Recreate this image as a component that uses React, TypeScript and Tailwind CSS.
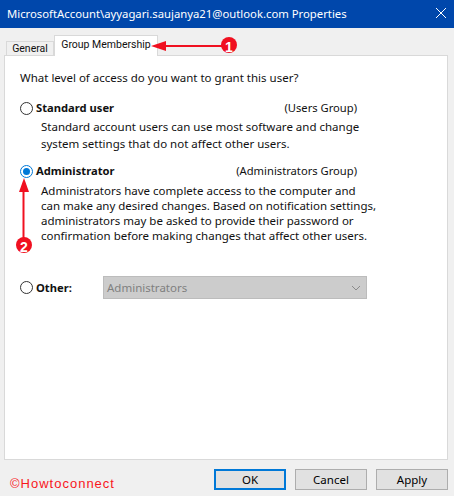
import React from 'react';

const font = "font-['Noto_Sans','Open_Sans',sans-serif]";

const Radio = ({ checked = false }: { checked?: boolean }) => (
    <span className={`flex h-[13px] w-[13px] shrink-0 items-center justify-center rounded-full border bg-white ${checked ? 'border-[#0078d7]' : 'border-[#333333]'}`}>
        {checked && <span className="h-[7px] w-[7px] rounded-full bg-[#0078d7]" />}
    </span>
);

const Button = ({ label, primary = false }: { label: string; primary?: boolean }) => (
    <button className={`flex h-[21px] w-[72px] items-center justify-center bg-[#e1e1e1] text-[11.5px] text-black ${primary ? 'border-2 border-[#0078d7]' : 'border border-[#adadad]'}`}>
        {label}
    </button>
);

const Option = ({ title, group, checked, lines, gap }: { title: string; group: string; checked?: boolean; lines: string[]; gap: string }) => (
    <div className="flex flex-col">
        <div className="flex h-[16px] items-center">
            <Radio checked={checked} />
            <span className="ml-[3px] text-[11.2px] font-bold">{title}</span>
            <span className="ml-auto mr-[3px] text-[11.2px]">{group}</span>
        </div>
        <div className={`flex flex-col pl-[21px] ${gap}`}>
            {lines.map((line) => (
                <span key={line} className="h-[15px] text-[11.5px] leading-[15px] whitespace-nowrap">{line}</span>
            ))}
        </div>
    </div>
);

export default function App() {
    return (
        <div className={`relative flex h-[496px] w-[454px] flex-col overflow-hidden bg-[#f0f0f0] text-[#111111] ${font}`}>
            {/* Title bar */}
            <div className="flex h-[28px] shrink-0 items-center justify-between bg-[#0047ab] pl-[7px] pr-[8px] text-white">
                <span className="text-[11.3px] whitespace-nowrap">MicrosoftAccount\ayyagari.saujanya21@outlook.com Properties</span>
                <svg width="10" height="10" viewBox="0 0 10 10" className="mb-[3px]" aria-hidden="true">
                    <path d="M0 0l10 10M10 0L0 10" stroke="#ffffff" strokeWidth="1" fill="none" />
                </svg>
            </div>

            {/* Tabs */}
            <div className="flex h-[27px] shrink-0 items-end pl-[6px] font-['Roboto',sans-serif]">
                <div className="flex h-[14px] w-[48px] items-center justify-center border border-b-0 border-[#d9d9d9] bg-[#f0f0f0] text-[10.5px]">General</div>
                <div className="z-10 -mb-px flex h-[21px] w-[104px] items-center justify-center border border-b-0 border-[#d9d9d9] bg-white pb-[2px] text-[10.5px] whitespace-nowrap">Group Membership</div>
            </div>

            {/* Panel */}
            <div className="mx-[4px] flex h-[405px] w-[444px] flex-col border border-[#d9d9d9] bg-white pl-[15px] pr-[87px]">
                <p className="mt-[13px] text-[11.5px]">What level of access do you want to grant this user?</p>
                <div className="mt-[14px]">
                    <Option
                        title="Standard user"
                        group="(Users Group)"
                        gap="mt-[3px] gap-[2px]"
                        lines={[
                            'Standard account users can use most software and change',
                            'system settings that do not affect other users.',
                        ]}
                    />
                </div>
                <div className="mt-[12px]">
                    <Option
                        title="Administrator"
                        group="(Administrators Group)"
                        gap="mt-[4px]"
                        checked
                        lines={[
                            'Administrators have complete access to the computer and',
                            'can make any desired changes. Based on notification settings,',
                            'administrators may be asked to provide their password or',
                            'confirmation before making changes that affect other users.',
                        ]}
                    />
                </div>
                <div className="mt-[33px] flex h-[23px] items-center">
                    <Radio />
                    <span className="ml-[3px] w-[67px] shrink-0 pt-px text-[11.2px] font-bold">Other:</span>
                    <div className="flex h-[23px] w-[264px] shrink-0 items-center justify-between border border-[#bcbcbc] bg-[#cccccc] pl-[3px] pr-[5px] text-[11.5px] text-[#7f7f7f]">
                        <span>Administrators</span>
                        <svg width="10" height="6" viewBox="0 0 10 6" aria-hidden="true">
                            <path d="M1 1l4 4 4-4" stroke="#8a8a8a" strokeWidth="1" fill="none" />
                        </svg>
                    </div>
                </div>
            </div>

            {/* Footer */}
            <div className="flex flex-1 items-start justify-between pl-[10px] pr-[6px] pt-[9px]">
                <span className="mt-[5px] font-['Liberation_Sans',sans-serif] text-[13px] tracking-[1px] text-[#f8171c]">©Howtoconnect</span>
                <div className="flex gap-[9px]">
                    <Button label="OK" primary />
                    <Button label="Cancel" />
                    <Button label="Apply" />
                </div>
            </div>

            {/* Annotations */}
            <svg width="454" height="496" viewBox="0 0 454 496" className="pointer-events-none absolute left-0 top-0 z-20" aria-hidden="true">
                <path d="M165 46h58" stroke="#f01020" strokeWidth="2" fill="none" />
                <path d="M151 46l15-5v10z" fill="#f01020" />
                <circle cx="229" cy="45" r="8" fill="#f01020" />
                <path d="M23.5 240V190" stroke="#f01020" strokeWidth="2" fill="none" />
                <path d="M24 178l5 14H19z" fill="#f01020" />
                <circle cx="24" cy="245" r="8" fill="#f01020" />
            </svg>
            <span className="absolute left-[225px] top-[37px] z-30 font-['Liberation_Sans',sans-serif] text-sm font-bold text-white">1</span>
            <span className="absolute left-[20px] top-[237px] z-30 font-['Liberation_Sans',sans-serif] text-sm font-bold text-white">2</span>
        </div>
    );
}
